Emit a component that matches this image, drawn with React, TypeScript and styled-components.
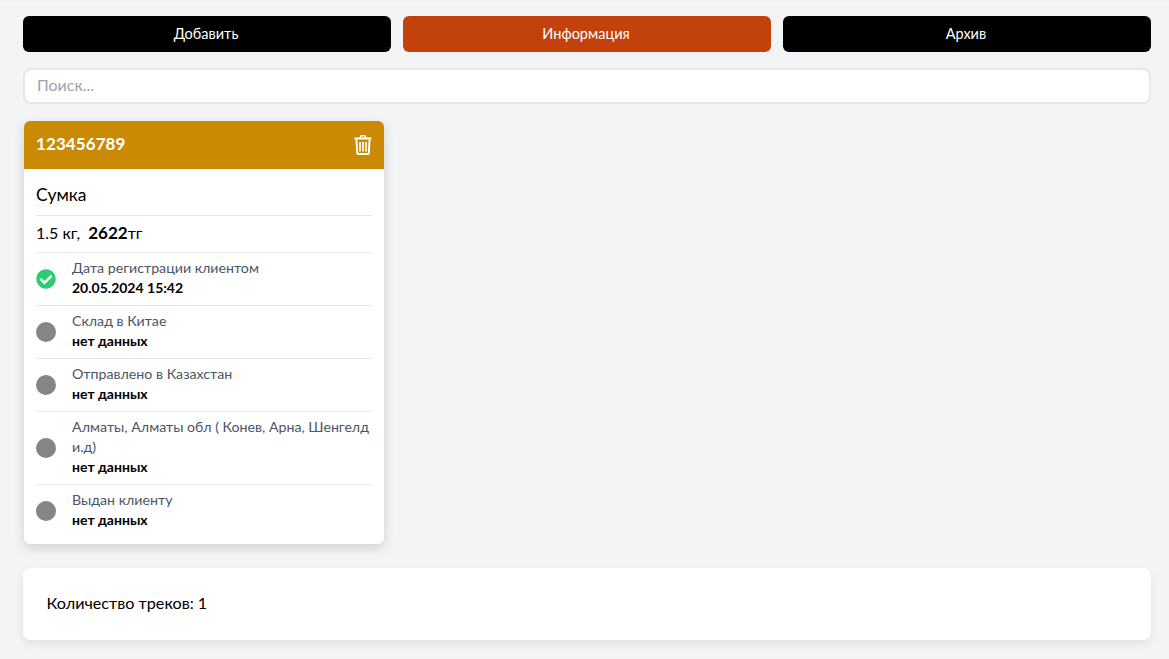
import React from "react";
import styled, { createGlobalStyle } from "styled-components";
import { FaCheckCircle } from "react-icons/fa";

const font = `Lato, "Noto Sans", sans-serif`;

const Global = createGlobalStyle`
  html, body { margin: 0; padding: 0; background: #f3f4f6; }
  body { font-family: ${font}; color: #000; }
  * { box-sizing: border-box; }
`;

const Page = styled.div`
  height: 659px;
  overflow: hidden;
  padding: 15px 18px 0 23px;
  border-top: 1px solid #eceef0;
  display: flex;
  flex-direction: column;
`;
const Toolbar = styled.div`
  display: grid;
  grid-template-columns: repeat(3, 1fr);
  gap: 12px;
`;
const ActionButton = styled.button<{ $active?: boolean }>`
  height: 36px;
  border: 0;
  border-radius: 6px;
  background: ${(p) => (p.$active ? "#c2410c" : "#000")};
  color: #fff;
  font: 14.5px ${font};
  padding: 0 2px 2px 0;
`;
const Search = styled.input`
  display: block;
  margin-top: 16px;
  width: 100%;
  height: 36px;
  border: 2px solid #e5e7eb;
  border-radius: 8px;
  background: #fff;
  padding: 0 12px 4px;
  font: 16px ${font};
  outline: none;
  &::placeholder { color: #9ca3af; opacity: 1; }
`;
const Card = styled.article`
  margin: 17px 0 0 1px;
  width: 360px;
  height: 423px;
  border-radius: 6px;
  overflow: hidden;
  background: #fff;
  box-shadow: 0 4px 12px rgba(0, 0, 0, 0.15);
`;
const CardHead = styled.header`
  height: 48px;
  background: #ca8a04;
  color: #fff;
  display: flex;
  align-items: center;
  justify-content: space-between;
  padding: 0 12px;
  font-size: 17px;
  font-weight: 700;
`;
const TrackCode = styled.span`
  padding-bottom: 3px;
  letter-spacing: 0.005em;
`;
const TrashIcon = styled.svg`
  width: 18px;
  height: 20px;
  fill: none;
  stroke: #fff;
`;
const CardBody = styled.div`
  padding: 0 12px;
`;
const Title = styled.div`
  height: 47px;
  display: flex;
  align-items: center;
  padding-top: 5px;
  font-size: 17.5px;
  border-bottom: 1px solid #e5e7eb;
`;
const Price = styled.div`
  height: 37px;
  display: flex;
  align-items: center;
  padding-bottom: 4px;
  font-size: 16px;
  white-space: pre;
  border-bottom: 1px solid #e5e7eb;
  b { font-size: 17px; font-weight: 700; }
`;
const Step = styled.div`
  display: flex;
  align-items: center;
  gap: 16px;
  min-height: 53px;
  border-bottom: 1px solid #e5e7eb;
  &:last-child { border-bottom: 0; min-height: 52px; }
`;
const Dot = styled.span`
  flex: none;
  width: 20px;
  height: 20px;
  border-radius: 50%;
  background: #858585;
`;
const Check = styled(FaCheckCircle)`
  flex: none;
  width: 20px;
  height: 20px;
  color: #2ecc71;
`;
const StepText = styled.div`
  min-width: 0;
  padding: 5px 0 7px;
`;
const StepLabel = styled.div`
  font-size: 14.2px;
  line-height: 20px;
  color: #4b5563;
`;
const StepValue = styled.div`
  font-size: 14px;
  line-height: 20px;
  font-weight: 700;
`;
const Footer = styled.div`
  margin-top: 24px;
  height: 72px;
  display: flex;
  align-items: center;
  padding: 0 24px 4px 23.5px;
  border-radius: 8px;
  background: #fff;
  font-size: 16.2px;
  box-shadow: 0 4px 10px rgba(0, 0, 0, 0.08);
`;

const steps = [
  { label: "Дата регистрации клиентом", value: "20.05.2024 15:42", done: true },
  { label: "Склад в Китае", value: "нет данных" },
  { label: "Отправлено в Казахстан", value: "нет данных" },
  { label: "Алматы, Алматы обл ( Конев, Арна, Шенгелд и.д)", value: "нет данных" },
  { label: "Выдан клиенту", value: "нет данных" },
];

export default function App() {
  return (
    <Page>
      <Global />
      <Toolbar>
        <ActionButton>Добавить</ActionButton>
        <ActionButton $active>Информация</ActionButton>
        <ActionButton>Архив</ActionButton>
      </Toolbar>
      <Search placeholder="Поиск..." />
      <Card>
        <CardHead>
          <TrackCode>123456789</TrackCode>
          <TrashIcon viewBox="0 0 18 20" aria-hidden="true">
            <path d="M0.5 3.6H17.5" strokeWidth="2" />
            <path d="M6.5 3V1.6C6.5 1.1 6.9 0.8 7.4 0.8H10.6C11.1 0.8 11.5 1.1 11.5 1.6V3" strokeWidth="1.4" />
            <path d="M2.4 4.5L3.2 18C3.3 18.7 3.7 19 4.3 19H13.7C14.3 19 14.7 18.7 14.8 18L15.6 4.5" strokeWidth="2" />
            <path d="M6 7V16.4M9 7V16.4M12 7V16.4" strokeWidth="1.7" />
          </TrashIcon>
        </CardHead>
        <CardBody>
          <Title>Сумка</Title>
          <Price>
            1.5 кг,  <b>2622</b>тг
          </Price>
          {steps.map((s) => (
            <Step key={s.label}>
              {s.done ? <Check /> : <Dot />}
              <StepText>
                <StepLabel>{s.label}</StepLabel>
                <StepValue>{s.value}</StepValue>
              </StepText>
            </Step>
          ))}
        </CardBody>
      </Card>
      <Footer>Количество треков: 1</Footer>
    </Page>
  );
}
